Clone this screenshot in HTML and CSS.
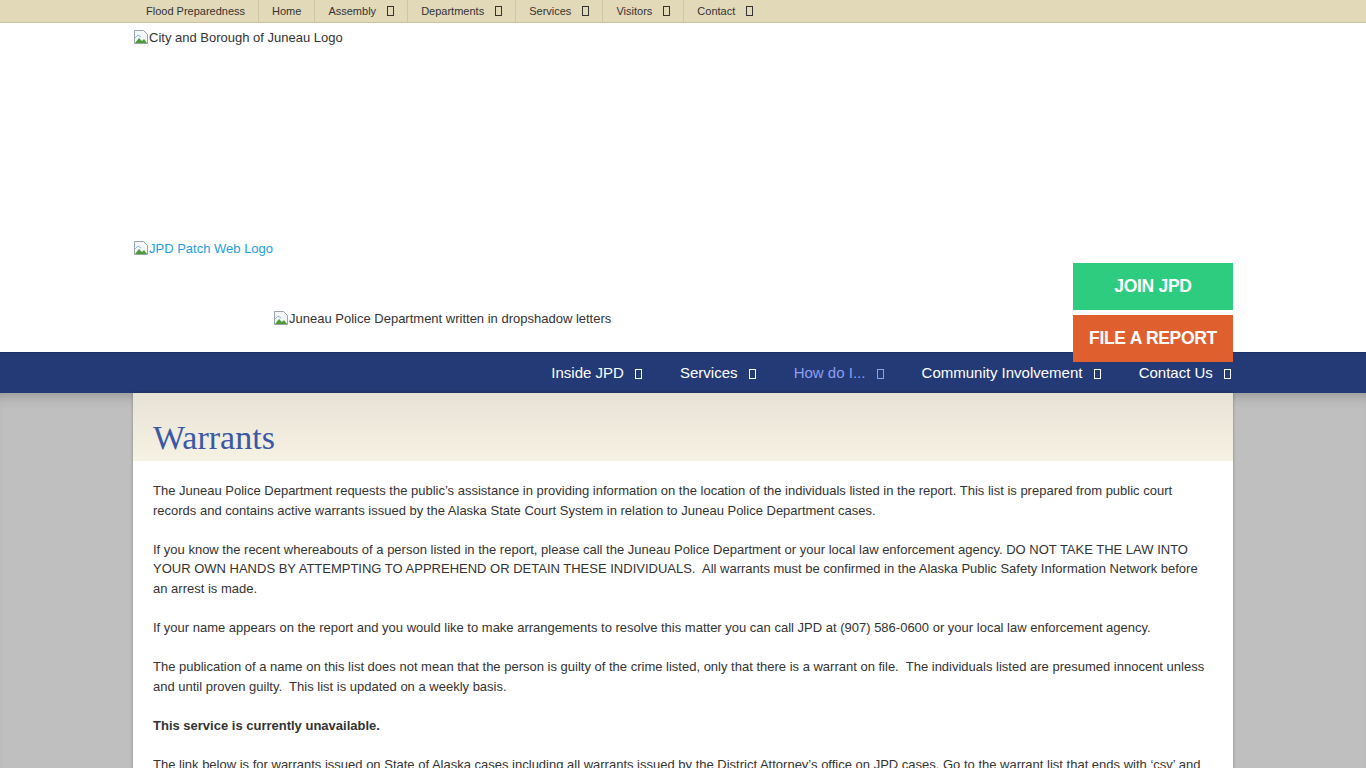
FILE: index.html
```html
<!DOCTYPE html>
<html lang="en">
<head>
    <meta charset="UTF-8">
    <meta name="viewport" content="width=device-width, initial-scale=1.0">
    <title>Warrants | Juneau Police Department</title>
    <link rel="stylesheet" href="styles.css">
</head>
<body>
    <div class="topbar">
        <ul class="wrap top-menu">
            <li>Flood Preparedness</li>
            <li>Home</li>
            <li>Assembly <span class="tofu"></span></li>
            <li>Departments <span class="tofu"></span></li>
            <li>Services <span class="tofu"></span></li>
            <li>Visitors <span class="tofu"></span></li>
            <li>Contact <span class="tofu"></span></li>
        </ul>
    </div>

    <header class="header">
        <div class="wrap masthead">
            <div class="logos">
                <div class="city-logo">
                    <svg class="broken" viewBox="0 0 16 16"><path d="M1.5 1.5h9l4 4v9h-13z" fill="#f4f6f8" stroke="#9aa3ad"/><path d="M2 14l4-5 3 3 2-2 3 4z" fill="#4f9b3a"/><path d="M2 9l3-3 3 2" fill="none" stroke="#8bbbe0"/></svg>City and Borough of Juneau Logo
                </div>
                <a class="patch-logo" href="#">
                    <svg class="broken" viewBox="0 0 16 16"><path d="M1.5 1.5h9l4 4v9h-13z" fill="#f4f6f8" stroke="#9aa3ad"/><path d="M2 14l4-5 3 3 2-2 3 4z" fill="#4f9b3a"/><path d="M2 9l3-3 3 2" fill="none" stroke="#8bbbe0"/></svg>JPD Patch Web Logo
                </a>
                <div class="title-logo">
                    <svg class="broken" viewBox="0 0 16 16"><path d="M1.5 1.5h9l4 4v9h-13z" fill="#f4f6f8" stroke="#9aa3ad"/><path d="M2 14l4-5 3 3 2-2 3 4z" fill="#4f9b3a"/><path d="M2 9l3-3 3 2" fill="none" stroke="#8bbbe0"/></svg>Juneau Police Department written in dropshadow letters
                </div>
            </div>
            <div class="cta">
                <a class="btn btn-join" href="#">JOIN JPD</a>
                <a class="btn btn-report" href="#">FILE A REPORT</a>
            </div>
        </div>
    </header>

    <nav class="mainnav">
        <ul class="wrap main-menu">
            <li>Inside JPD <span class="tofu"></span></li>
            <li>Services <span class="tofu"></span></li>
            <li class="active">How do I... <span class="tofu"></span></li>
            <li>Community Involvement <span class="tofu"></span></li>
            <li>Contact Us <span class="tofu"></span></li>
        </ul>
    </nav>

    <main class="page">
        <div class="wrap content">
            <div class="page-title">
                <h1>Warrants</h1>
            </div>
            <div class="entry">
                <p>The Juneau Police Department requests the public’s assistance in providing information on the location of the individuals listed in the report. This list is prepared from public court records and contains active warrants issued by the Alaska State Court System in relation to Juneau Police Department cases.</p>
                <p>If you know the recent whereabouts of a person listed in the report, please call the Juneau Police Department or your local law enforcement agency. DO NOT TAKE THE LAW INTO YOUR OWN HANDS BY ATTEMPTING TO APPREHEND OR DETAIN THESE INDIVIDUALS.&nbsp; All warrants must be confirmed in the Alaska Public Safety Information Network before an arrest is made.</p>
                <p>If your name appears on the report and you would like to make arrangements to resolve this matter you can call JPD at (907) 586-0600 or your local law enforcement agency.</p>
                <p>The publication of a name on this list does not mean that the person is guilty of the crime listed, only that there is a warrant on file.&nbsp; The individuals listed are presumed innocent unless and until proven guilty.&nbsp; This list is updated on a weekly basis.</p>
                <p><strong>This service is currently unavailable.</strong></p>
                <p>The link below is for warrants issued on State of Alaska cases including all warrants issued by the District Attorney’s office on JPD cases. Go to the warrant list that ends with ‘csv’ and open it to search for names. Warrants issued on municipal cases are not included in the list.</p>
            </div>
        </div>
    </main>
</body>
</html>
```

FILE: styles.css
```css
body {
    margin: 0;
    font-family: "Liberation Sans", Arial, sans-serif;
    color: #333;
    background: #bfbfbf;
}
ul {
    list-style: none;
    margin: 0;
    padding: 0;
}
a {
    text-decoration: none;
}
.wrap {
    width: 1100px;
    margin: 0 auto;
}
.tofu {
    display: inline-block;
    width: 5px;
    height: 8px;
    border: 1px solid currentColor;
    margin-left: 7px;
    vertical-align: -1px;
}

/* top utility bar */
.topbar {
    background: #e2d9b9;
    border-bottom: 1px solid #cbc19f;
}
.top-menu {
    display: flex;
    height: 22px;
}
.top-menu li {
    font-size: 11px;
    line-height: 22px;
    color: #333;
    padding: 0 13px;
    border-right: 1px solid #cfc5a3;
}
.top-menu .tofu {
    margin-left: 8px;
}
.top-menu li:last-child {
    border-right: none;
}

/* header */
.header {
    background: #fff;
    position: relative;
    z-index: 2;
}
.masthead {
    display: flex;
    justify-content: space-between;
    align-items: flex-end;
    height: 329px;
}
.logos {
    align-self: stretch;
    font-size: 13px;
}
.broken {
    width: 16px;
    height: 16px;
    vertical-align: -3px;
}
.city-logo {
    padding-top: 6px;
    height: 211px;
}
.patch-logo {
    display: block;
    color: #1d9fdc;
}
.title-logo {
    margin: 54px 0 0 140px;
}
.cta {
    display: flex;
    flex-direction: column;
    gap: 5px;
    margin-bottom: -10px;
}
.btn {
    display: block;
    width: 160px;
    height: 47px;
    line-height: 47px;
    text-align: center;
    color: #fff;
    font-size: 17.5px;
    font-weight: 600;
    letter-spacing: -0.3px;
}
.btn-join {
    background: #2ecc7f;
}
.btn-report {
    background: #e05f2f;
}

/* main navigation */
.mainnav {
    background: #233a76;
    border-top: 1px solid #1c3068;
}
.main-menu {
    display: flex;
    justify-content: flex-end;
    height: 40px;
}
.main-menu li {
    color: #fff;
    font-size: 15px;
    line-height: 40px;
    margin-left: 36px;
    padding-right: 2px;
}
.main-menu li.active {
    color: #8e9ff0;
}

/* page body */
.page {
    box-shadow: inset 0 12px 14px -10px rgba(0,0,0,0.25);
}
.content {
    background: #fff;
    box-shadow: 0 0 3px rgba(0,0,0,0.3);
    min-height: 380px;
}
.page-title {
    background: linear-gradient(#e7e2d6, #f6f2e3);
    height: 68px;
    padding: 0 20px;
}
.page-title h1 {
    margin: 0;
    font-family: "Liberation Serif", "Times New Roman", serif;
    font-weight: normal;
    font-size: 34px;
    line-height: 90px;
    color: #3b57a6;
}
.entry {
    padding: 20px 20px 10px;
    font-size: 13px;
    line-height: 19.6px;
}
.entry p {
    margin: 0 0 19.6px;
}
```
